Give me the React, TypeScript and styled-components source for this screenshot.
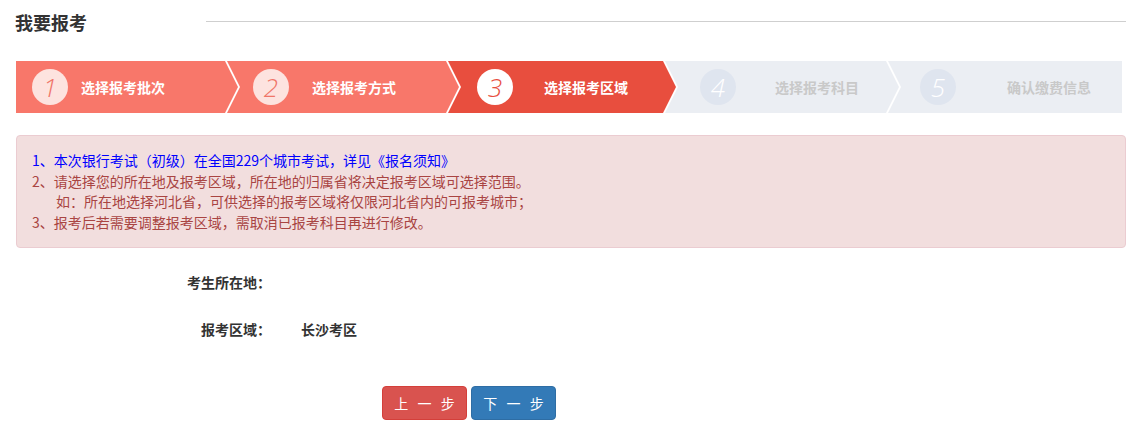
import React from "react";
import styled, { createGlobalStyle, css } from "styled-components";

const GlobalStyle = createGlobalStyle`
  html, body { margin: 0; padding: 0; background: #fff; }
  body { font-family: "Noto Sans CJK SC", "Microsoft YaHei", sans-serif; color: #333; }
`;

const Page = styled.div`
  padding: 0 18px 0 16px;
`;

const Header = styled.div`
  display: flex;
  align-items: center;
  height: 43px;
`;

const Title = styled.h2`
  margin: 0 0 0 -1px;
  width: 191px;
  font-size: 18px;
  font-weight: bold;
  line-height: 24px;
  color: #333;
`;

const HeaderLine = styled.div`
  flex: 1;
  height: 1px;
  background: #cfcfcf;
`;

const Steps = styled.div`
  display: flex;
  height: 52px;
  margin: 18px 4px 0 0;
`;

type Variant = "done" | "active" | "todo";

const stepBg: Record<Variant, string> = {
  done: "#f8776a",
  active: "#e84e3e",
  todo: "#ebeef3",
};

const StepItem = styled.div<{ $variant: Variant; $w?: number; $first?: boolean; $last?: boolean; $pad: number }>`
  display: flex;
  align-items: center;
  box-sizing: border-box;
  height: 100%;
  padding-left: ${(p) => p.$pad}px;
  background: ${(p) => stepBg[p.$variant]};
  ${(p) => (p.$last ? css`flex: 1;` : css`width: ${p.$w}px; flex: none;`)}
  margin-left: ${(p) => (p.$first ? 0 : -11)}px;
  clip-path: ${(p) =>
    p.$first
      ? "polygon(0 0, calc(100% - 13px) 0, 100% 50%, calc(100% - 13px) 100%, 0 100%)"
      : p.$last
      ? "polygon(0 0, 100% 0, 100% 100%, 0 100%, 13px 50%)"
      : "polygon(0 0, calc(100% - 13px) 0, 100% 50%, calc(100% - 13px) 100%, 0 100%, 13px 50%)"};
`;

const circleStyles: Record<Variant, ReturnType<typeof css>> = {
  done: css`background: #fde3df; color: #f07568;`,
  active: css`background: #ffffff; color: #e84e3e;`,
  todo: css`background: #dfe5ef; color: #ffffff;`,
};

const Circle = styled.span<{ $variant: Variant }>`
  display: flex;
  align-items: center;
  justify-content: center;
  width: 36px;
  height: 36px;
  border-radius: 50%;
  flex: none;
  font-family: "Open Sans", "DejaVu Sans", sans-serif;
  font-style: italic;
  font-weight: 300;
  font-size: 26px;
  line-height: 1;
  ${(p) => circleStyles[p.$variant]}
`;

const StepLabel = styled.span<{ $variant: Variant; $gap: number }>`
  margin-left: ${(p) => p.$gap}px;
  font-size: 14px;
  font-weight: bold;
  white-space: nowrap;
  color: ${(p) => (p.$variant === "todo" ? "#c9c9c9" : "#ffffff")};
`;

const Alert = styled.div`
  margin-top: 22px;
  padding: 14px 15px;
  background: #f2dede;
  border: 1px solid #ebccd1;
  border-radius: 4px;
  color: #a94442;
  font-size: 14px;
  line-height: 20.7px;
`;

const AlertLine = styled.div<{ $indent?: boolean; $link?: boolean }>`
  padding-left: ${(p) => (p.$indent ? 24 : 0)}px;
  color: ${(p) => (p.$link ? "#0000ff" : "inherit")};
  white-space: nowrap;
`;

const Form = styled.div`
  display: flex;
  flex-direction: column;
  gap: 27px;
  margin-top: 24px;
`;

const FormRow = styled.div`
  display: flex;
  align-items: center;
  height: 20px;
  font-size: 14px;
  font-weight: bold;
  color: #333;
`;

const Label = styled.span`
  width: 255px;
  text-align: right;
  flex: none;
`;

const Value = styled.span`
  margin-left: 30px;
`;

const Actions = styled.div`
  display: flex;
  gap: 4px;
  margin-top: 47px;
  padding-left: 366px;
`;

const Button = styled.button<{ $tone: "danger" | "primary" }>`
  width: 85px;
  height: 34px;
  border-radius: 4px;
  border: 1px solid ${(p) => (p.$tone === "danger" ? "#d43f3a" : "#2e6da4")};
  background: ${(p) => (p.$tone === "danger" ? "#d9534f" : "#337ab7")};
  color: #fff;
  font-family: "Noto Sans CJK SC", sans-serif;
  font-size: 14px;
  letter-spacing: 3px;
  padding: 0 0 0 3px;
  cursor: pointer;
  white-space: pre;
`;

const steps: { n: number; label: string; variant: Variant; w?: number; pad: number; gap: number }[] = [
  { n: 1, label: "选择报考批次", variant: "done", w: 222, pad: 16, gap: 13 },
  { n: 2, label: "选择报考方式", variant: "done", w: 232, pad: 26, gap: 23 },
  { n: 3, label: "选择报考区域", variant: "active", w: 228, pad: 29, gap: 31 },
  { n: 4, label: "选择报考科目", variant: "todo", w: 234, pad: 35, gap: 39 },
  { n: 5, label: "确认缴费信息", variant: "todo", pad: 32, gap: 51 },
];

export default function App() {
  return (
    <Page>
      <GlobalStyle />
      <Header>
        <Title>我要报考</Title>
        <HeaderLine />
      </Header>
      <Steps>
        {steps.map((s, i) => (
          <StepItem
            key={s.n}
            $variant={s.variant}
            $w={s.w}
            $first={i === 0}
            $last={i === steps.length - 1}
            $pad={s.pad}
          >
            <Circle $variant={s.variant}>{s.n}</Circle>
            <StepLabel $variant={s.variant} $gap={s.gap}>
              {s.label}
            </StepLabel>
          </StepItem>
        ))}
      </Steps>
      <Alert>
        <AlertLine $link>1、本次银行考试（初级）在全国229个城市考试，详见《报名须知》</AlertLine>
        <AlertLine>2、请选择您的所在地及报考区域，所在地的归属省将决定报考区域可选择范围。</AlertLine>
        <AlertLine $indent>如：所在地选择河北省，可供选择的报考区域将仅限河北省内的可报考城市；</AlertLine>
        <AlertLine>3、报考后若需要调整报考区域，需取消已报考科目再进行修改。</AlertLine>
      </Alert>
      <Form>
        <FormRow>
          <Label>考生所在地：</Label>
        </FormRow>
        <FormRow>
          <Label>报考区域：</Label>
          <Value>长沙考区</Value>
        </FormRow>
      </Form>
      <Actions>
        <Button $tone="danger">上 一 步</Button>
        <Button $tone="primary">下 一 步</Button>
      </Actions>
    </Page>
  );
}
